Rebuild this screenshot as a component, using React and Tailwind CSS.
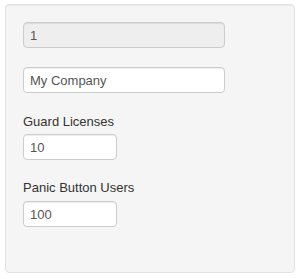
import React from 'react';

const Field = ({ value, disabled, wide }) => (
  <input
    type="text"
    defaultValue={value}
    disabled={disabled}
    className={`block h-[26px] px-[6px] rounded-[4px] border border-[#cccccc] text-[13px] text-[#555555] outline-none shadow-[inset_0_1px_1px_rgba(0,0,0,0.075)] ${
      wide ? 'w-[202px]' : 'w-[94px]'
    } ${disabled ? 'bg-[#eeeeee]' : 'bg-white'}`}
  />
);

export default function App() {
  return (
    <div className="bg-white w-[300px] h-[279px] pt-[4px] px-[5px] font-['Helvetica_Neue','Liberation_Sans',Arial,sans-serif]">
      <div className="h-[269px] bg-[#f5f5f5] border border-[#e3e3e3] rounded-[4px] shadow-[inset_0_1px_1px_rgba(0,0,0,0.05)] px-[17px] pt-[17px]">
        {/* Account id */}
        <Field value="1" disabled wide />

        {/* Company name */}
        <div className="mt-[19px]">
          <Field value="My Company" wide />
        </div>

        {/* Guard Licenses */}
        <label className="block mt-[20px] text-[13px] leading-[18px] text-[#333333]">Guard Licenses</label>
        <div className="mt-[3px]">
          <Field value="10" />
        </div>

        {/* Panic Button Users */}
        <label className="block mt-[19px] text-[13px] leading-[18px] text-[#333333]">Panic Button Users</label>
        <div className="mt-[4px]">
          <Field value="100" />
        </div>
      </div>
    </div>
  );
}
